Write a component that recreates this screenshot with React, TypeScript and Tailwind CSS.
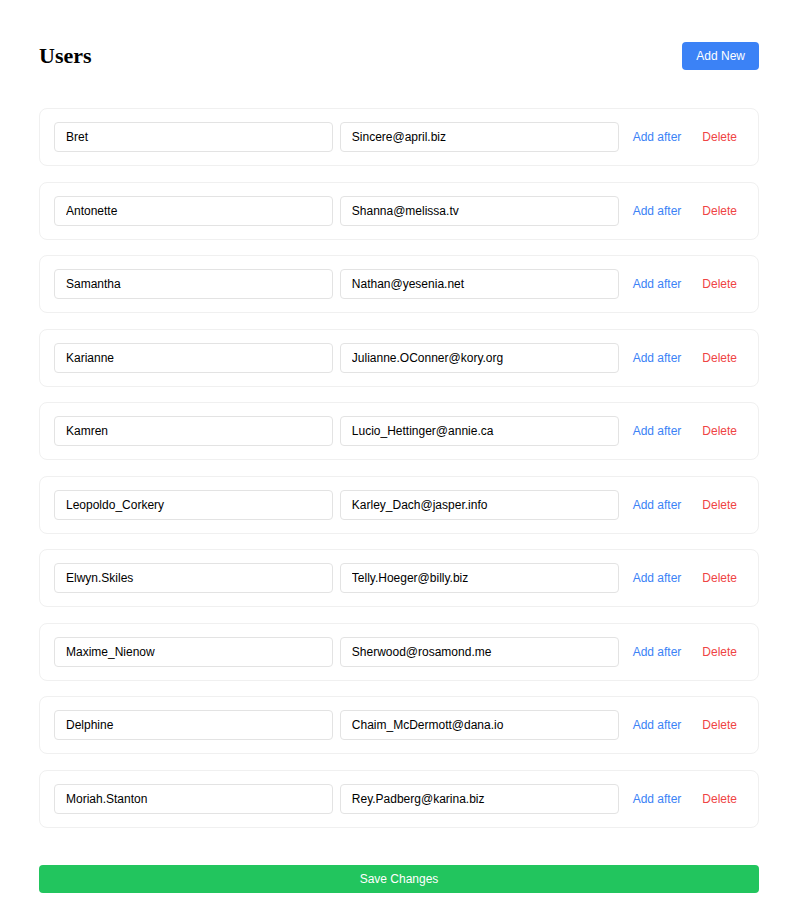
import React, { useState } from "react";

type User = { id: number; username: string; email: string };

const initialUsers: User[] = [
  { id: 1, username: "Bret", email: "Sincere@april.biz" },
  { id: 2, username: "Antonette", email: "Shanna@melissa.tv" },
  { id: 3, username: "Samantha", email: "Nathan@yesenia.net" },
  { id: 4, username: "Karianne", email: "Julianne.OConner@kory.org" },
  { id: 5, username: "Kamren", email: "Lucio_Hettinger@annie.ca" },
  { id: 6, username: "Leopoldo_Corkery", email: "Karley_Dach@jasper.info" },
  { id: 7, username: "Elwyn.Skiles", email: "Telly.Hoeger@billy.biz" },
  { id: 8, username: "Maxime_Nienow", email: "Sherwood@rosamond.me" },
  { id: 9, username: "Delphine", email: "Chaim_McDermott@dana.io" },
  { id: 10, username: "Moriah.Stanton", email: "Rey.Padberg@karina.biz" },
];

const App = () => {
  const [users, setUsers] = useState<User[]>(initialUsers);
  const [nextId, setNextId] = useState(11);

  const update = (id: number, field: "username" | "email", value: string) => {
    setUsers(users.map((u) => (u.id === id ? { ...u, [field]: value } : u)));
  };

  const addAt = (index: number) => {
    const copy = [...users];
    copy.splice(index, 0, { id: nextId, username: "", email: "" });
    setUsers(copy);
    setNextId(nextId + 1);
  };

  const remove = (id: number) => setUsers(users.filter((u) => u.id !== id));

  return (
    <div
      className="min-h-screen bg-white pt-[42px] pb-[30px]"
      style={{ fontFamily: '"Liberation Sans", Arial, sans-serif' }}
    >
      <div className="ml-[39px] w-[720px]">
        {/* Header */}
        <div className="flex items-center justify-between">
          <h1
            className="text-[22px] font-bold text-black leading-none"
            style={{ fontFamily: '"Liberation Serif", "Times New Roman", serif' }}
          >
            Users
          </h1>
          <button
            onClick={() => addAt(0)}
            className="h-[28px] px-[14px] rounded bg-[#3b82f6] text-white text-[12px]"
          >
            Add New
          </button>
        </div>

        {/* User rows */}
        <div className="mt-[38px] flex flex-col gap-[15.5px]">
          {users.map((user, i) => (
            <div
              key={user.id}
              className="flex items-center gap-[7px] rounded-lg border border-[#f0f0f0] px-[14px] py-[13px]"
            >
              <input
                value={user.username}
                onChange={(e) => update(user.id, "username", e.target.value)}
                className="h-[30px] min-w-0 flex-1 rounded border border-[#e3e3e3] px-[11px] text-[12px] text-black outline-none"
              />
              <input
                value={user.email}
                onChange={(e) => update(user.id, "email", e.target.value)}
                className="h-[30px] min-w-0 flex-1 rounded border border-[#e3e3e3] px-[11px] text-[12px] text-black outline-none"
              />
              <button
                onClick={() => addAt(i + 1)}
                className="px-[7px] text-[12px] text-[#3b82f6]"
              >
                Add after
              </button>
              <button
                onClick={() => remove(user.id)}
                className="px-[7px] text-[12px] text-[#ef4444]"
              >
                Delete
              </button>
            </div>
          ))}
        </div>

        <button className="mt-[37px] h-[28px] w-full rounded bg-[#22c55e] text-white text-[12px]">
          Save Changes
        </button>
      </div>
    </div>
  );
};

export default App;
